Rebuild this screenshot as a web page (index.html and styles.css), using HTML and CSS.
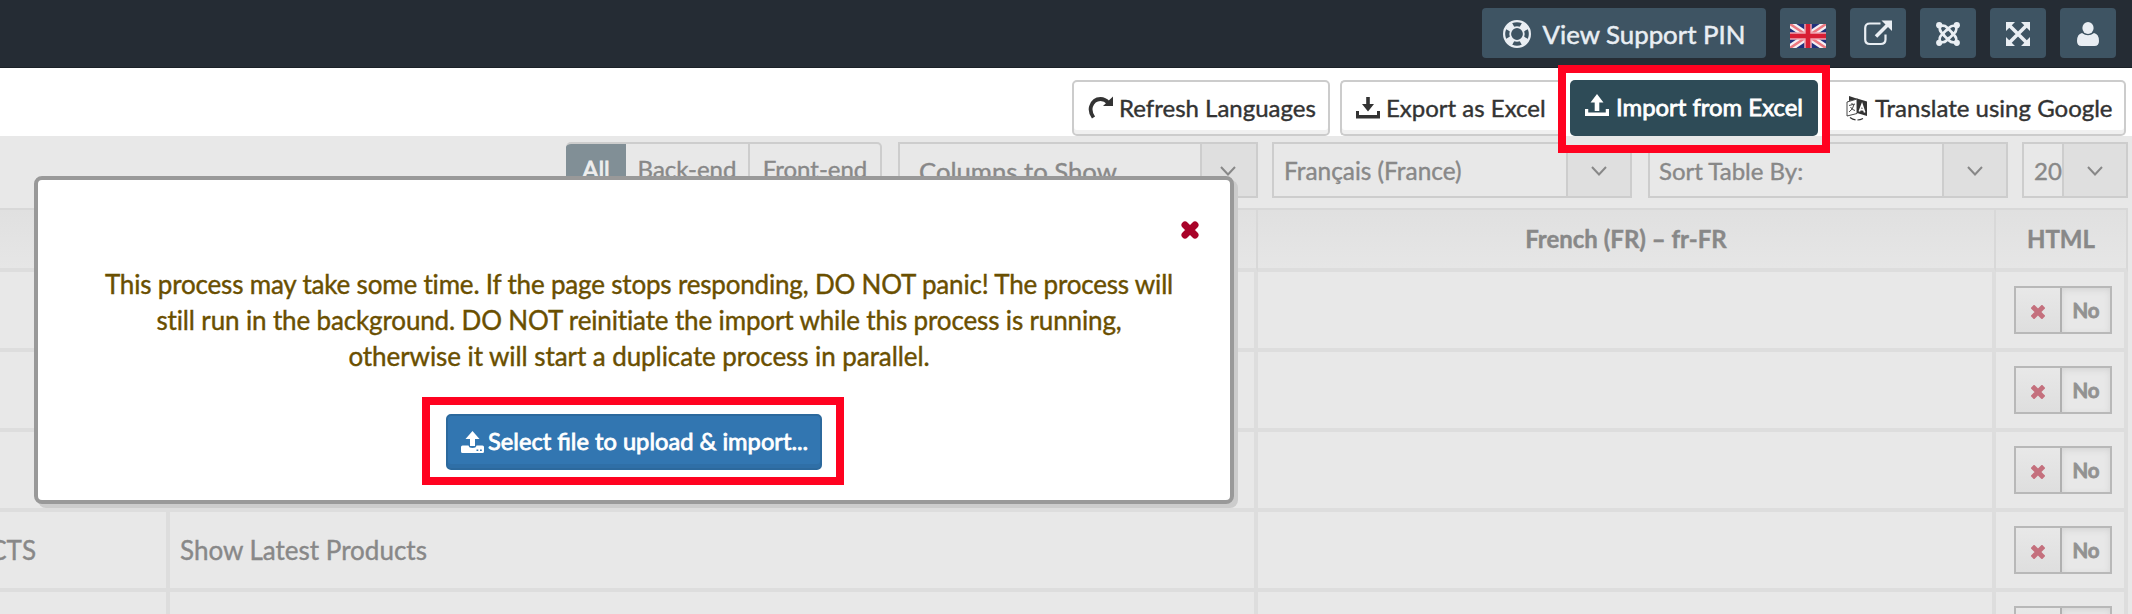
FILE: index.html
```html
<!DOCTYPE html>
<html lang="en">
<head>
<meta charset="utf-8">
<title>Language Manager</title>
<link rel="stylesheet" href="styles.css">
</head>
<body>
<header class="topbar">
  <button class="tb-btn support">
    <svg width="28" height="28" viewBox="0 0 28 28" fill="none" stroke="currentColor"><circle cx="14" cy="14" r="12.900" stroke-width="2.200"/><circle cx="14" cy="14" r="6.800" stroke-width="1.800"/><g fill="currentColor" stroke="none" transform="rotate(45 14 14)"><path id="w" d="M9.500 2Q14 .4 18.500 2L16.800 8.200Q14 7 11.200 8.200Z"/><use href="#w" transform="rotate(90 14 14)"/><use href="#w" transform="rotate(180 14 14)"/><use href="#w" transform="rotate(270 14 14)"/></g></svg>
    <span>View Support PIN</span>
  </button>
  <button class="tb-btn flag">
    <svg width="36" height="24" viewBox="0 0 36 24"><rect width="36" height="24" fill="#20307c"/><path d="M0 0L36 24M36 0L0 24" stroke="#f4f0f4" stroke-width="7"/><path d="M0 0L36 24M36 0L0 24" stroke="#ec7880" stroke-width="2.600"/><path d="M18 0V24M0 12H36" stroke="#f0a8b4" stroke-width="7.500"/><path d="M18 0V24M0 12H36" stroke="#d81e34" stroke-width="4.600"/></svg>
  </button>
  <button class="tb-btn ext">
    <svg width="28" height="26" viewBox="0 0 28 26" fill="none" stroke="currentColor"><path d="M16.500 3.500H6Q1.200 3.500 1.200 8V19.500Q1.200 24 6 24H16.500Q21.500 24 21.500 19.500V14.500" stroke-width="2.200"/><path d="M12 16.500L24 4.500" stroke-width="3.600"/><path d="M17.500 .5H28V11Z" fill="currentColor" stroke="none"/></svg>
  </button>
  <button class="tb-btn">
    <svg width="24" height="24" viewBox="0 0 24 24" fill="none" stroke="currentColor" stroke-width="2.600"><g id="j"><path d="M4 4Q8.500 2.800 11 5.500L17.500 12M4 4.500Q3 8 5.500 10.500L8.500 13.500"/><circle cx="3.200" cy="3.200" r="3.100" fill="currentColor" stroke="none"/></g><use href="#j" transform="rotate(90 12 12)"/><use href="#j" transform="rotate(180 12 12)"/><use href="#j" transform="rotate(270 12 12)"/></svg>
  </button>
  <button class="tb-btn">
    <svg width="24" height="24" viewBox="0 0 24 24"><path d="M4 4L20 20M20 4L4 20" stroke="currentColor" stroke-width="3.600"/><path d="M0 0H9L0 9ZM24 0V9L15 0ZM0 24V15L9 24ZM24 24H15L24 15Z" fill="currentColor"/></svg>
  </button>
  <button class="tb-btn">
    <svg width="22" height="24" viewBox="0 0 22 24" fill="currentColor"><ellipse cx="11" cy="6" rx="5.600" ry="6"/><path d="M5 11Q11 15.500 17 11Q22 12 22 19Q22 24 17.500 24H4.500Q0 24 0 19Q0 12 5 11Z"/></svg>
  </button>
</header>

<div class="toolbar">
  <button class="btn refresh"><svg width="25" height="24" viewBox="0 0 25 24"><path d="M5.500 21.500Q1.500 16 3 10.500Q5.500 3 12.500 3Q17 3 20.500 7" fill="none" stroke="currentColor" stroke-width="3.800"/><path d="M25 .5V10H15Z" fill="currentColor"/></svg><span>Refresh Languages</span></button>
  <button class="btn export"><svg width="24" height="22" viewBox="0 0 24 22" fill="currentColor"><path d="M10.200 0H13.800V7H18L12 14.500L6 7H10.200ZM0 14H3V18H21V14H24V21.500H0Z"/></svg><span>Export as Excel</span></button>
  <div class="highlight import-mark"><button class="btn import"><svg width="24" height="22" viewBox="0 0 26 22" fill="currentColor" preserveAspectRatio="none"><path d="M13 0L20 8.500H15.500V17H10.500V8.500H6ZM0 15H3.500V18.500H22.500V15H26V22H0Z"/></svg><span>Import from Excel</span></button></div>
  <button class="btn translate"><svg width="22" height="25" viewBox="0 0 22 25"><path d="M3 0L12 3L3 5Z" fill="currentColor"/><path d="M11 2.500L21 5.500V20L11 17Z" fill="currentColor"/><path d="M1 6L11 3V17.500L1 20Z" fill="#fff" stroke="currentColor" stroke-width=".9"/><path d="M3 9.500L9 8M6 7V8.500M8 8.500Q7 13.500 3 16M4.500 11Q6 14 9 14.500" fill="none" stroke="currentColor" stroke-width=".9"/><path d="M4 21.500Q10 26 17 22.500" fill="none" stroke="currentColor" stroke-width="1.200" stroke-dasharray="6 2"/><path d="M13.300 15.500L16 8.500L18.700 16.500M14.300 13.300L17.800 14" fill="none" stroke="#fff" stroke-width="1.700"/></svg><span>Translate using Google</span></button>
</div>

<main class="content">
  <div class="filters">
    <div class="tabs"><span class="tab on">All</span><span class="tab back">Back-end</span><span class="tab front">Front-end</span></div>
    <div class="select columns"><span class="val">Columns to Show</span><span class="arrow"><svg width="16" height="10" viewBox="0 0 16 10"><path d="M1 1L8 8.500L15 1"/></svg></span></div>
    <div class="select lang"><span class="val">Français (France)</span><span class="arrow"><svg width="16" height="10" viewBox="0 0 16 10"><path d="M1 1L8 8.500L15 1"/></svg></span></div>
    <div class="select sort"><span class="val">Sort Table By:</span><span class="arrow"><svg width="16" height="10" viewBox="0 0 16 10"><path d="M1 1L8 8.500L15 1"/></svg></span></div>
    <div class="select limit"><span class="val">20</span><span class="arrow"><svg width="16" height="10" viewBox="0 0 16 10"><path d="M1 1L8 8.500L15 1"/></svg></span></div>
  </div>
  <div class="grid">
    <div class="row head"><div class="c"></div><div class="c"></div><div class="c">French (FR) – fr-FR</div><div class="c">HTML</div></div>
    <div class="row"><div class="c"></div><div class="c"></div><div class="c"></div><div class="c"><div class="toggle"><span class="x"><svg width="16" height="16" viewBox="0 0 16 16"><path d="M3.500 3.500L12.500 12.500M12.500 3.500L3.500 12.500"/></svg></span><span class="no">No</span></div></div></div>
    <div class="row"><div class="c"></div><div class="c"></div><div class="c"></div><div class="c"><div class="toggle"><span class="x"><svg width="16" height="16" viewBox="0 0 16 16"><path d="M3.500 3.500L12.500 12.500M12.500 3.500L3.500 12.500"/></svg></span><span class="no">No</span></div></div></div>
    <div class="row"><div class="c"></div><div class="c"></div><div class="c"></div><div class="c"><div class="toggle"><span class="x"><svg width="16" height="16" viewBox="0 0 16 16"><path d="M3.500 3.500L12.500 12.500M12.500 3.500L3.500 12.500"/></svg></span><span class="no">No</span></div></div></div>
    <div class="row"><div class="c key"><span>CTS</span></div><div class="c">Show Latest Products</div><div class="c"></div><div class="c"><div class="toggle"><span class="x"><svg width="16" height="16" viewBox="0 0 16 16"><path d="M3.500 3.500L12.500 12.500M12.500 3.500L3.500 12.500"/></svg></span><span class="no">No</span></div></div></div>
    <div class="row last"><div class="c"></div><div class="c"></div><div class="c"></div><div class="c"><div class="toggle"><span class="x"></span><span class="no"></span></div></div></div>
  </div>
</main>

<section class="modal">
  <svg class="close" width="18" height="18" viewBox="0 0 18 18"><path d="M4 4L14 14M14 4L4 14"/></svg>
  <p class="msg">This process may take some time. If the page stops responding, DO NOT panic! The process will<br><span class="mid">still run in the background. DO NOT reinitiate the import while this process is running,</span><br><span class="end">otherwise it will start a duplicate process in parallel.</span></p>
  <div class="highlight select-mark"><button class="btn upload"><svg width="23" height="22" viewBox="0 0 23 22" fill="currentColor"><path d="M11.500 0L18.500 8H14V15H9V8H4.500Z"/><path fill-rule="evenodd" d="M1.500 14.500H7.500Q8 17 11.500 17Q15 17 15.500 14.500H21.500Q23 14.500 23 16V20.500Q23 22 21.500 22H1.500Q0 22 0 20.500V16Q0 14.500 1.500 14.500ZM15.500 18.500V20H17.300V18.500ZM19 18.500V20H20.800V18.500Z"/></svg><span>Select file to upload &amp; import...</span></button></div>
</section>
</body>
</html>
```

FILE: styles.css
```css
* { box-sizing: border-box; }
body { margin: 0; width: 2132px; height: 614px; overflow: hidden; position: relative; background: #fff; font: 26px/36px Lato, sans-serif; color: #333; -webkit-text-stroke: .4px; }
button { font: inherit; margin: 0; padding: 0; border: 0; display: flex; align-items: center; white-space: nowrap; }
svg { display: block; flex: none; }
span { white-space: nowrap; }

.topbar { height: 68px; padding: 8px 16px 0; display: flex; justify-content: flex-end; gap: 14px; background: #252c34; border-bottom: 1px solid #1b2127; }
.tb-btn { width: 56px; height: 50px; justify-content: center; background: #3e5463; color: #e9eef3; border-radius: 4px; }
.tb-btn > svg { margin-top: 2px; }
.support { width: 284px; gap: 12px; font-size: 25.8px; -webkit-text-stroke: .5px; }
.support span { padding-top: 2px; }
.tb-btn.flag > svg { margin-top: 6px; }
.tb-btn.ext > svg { margin-top: -1px; }

.toolbar { height: 68px; padding: 12px 6px 0 1072px; display: flex; }
.btn { height: 56px; padding-left: 13px; border: 2px solid #ccc; border-radius: 5px; background: #fff; box-shadow: inset 0 -4px #f0f0f0; color: #333; gap: 7px; font-size: 24px; }
.refresh { width: 258px; margin-right: 10px; padding-left: 14px; gap: 6px; }
.export { width: 218px; padding-left: 14px; gap: 6px; border-right: 0; border-radius: 5px 0 0 5px; }
.highlight { border: 8px solid #ff0220; position: relative; z-index: 3; background: #fff; }
.import-mark { width: 272px; height: 88px; margin-top: -15px; padding: 7px 4px; background: linear-gradient(#fff 63px, #e8e8e8 63px); }
.import { width: 248px; border: 0; padding: 0 0 3px 15px; background: #2e4b57; color: #fff; box-shadow: none; -webkit-text-stroke: .8px; gap: 7px; font-size: 23.9px; }
.import svg { margin-top: -3px; }
.translate { width: 296px; border-left: 0; padding-left: 16px; gap: 7px; border-radius: 0 5px 5px 0; }

.content { background: #e8e8e8; height: 478px; color: #888; overflow: hidden; }
.filters { height: 72px; padding: 6px 4px 0 566px; display: flex; font-size: 24px; }
.tabs { display: flex; width: 316px; height: 56px; margin-right: 16px; border: 2px solid #cdcdcd; border-left: 0; border-radius: 5px; overflow: hidden; }
.tab { padding-top: 7px; text-align: center; }
.on { width: 60px; margin-top: -2px; padding-top: 9px; background: #818f96; color: #eee; -webkit-text-stroke: .8px; }
.back { width: 124px; border-right: 2px solid #cdcdcd; }
.front { flex: 1; }
.select { display: flex; height: 56px; border: 2px solid #cdcdcd; }
.val { flex: 1; padding: 9px 0 0 10px; overflow: hidden; }
.arrow { width: 64px; border-left: 2px solid #cdcdcd; background: #dfdfdf; padding: 22px 0 0 23px; }
.arrow path, .toggle path, .close path { fill: none; stroke: #888; stroke-width: 2; }
.columns { width: 360px; margin-right: 14px; }
.columns .val { padding: 9px 0 0 19px; font-size: 25.7px; }
.columns .arrow { width: 56px; padding-left: 18px; }
.lang { width: 360px; margin-right: 16px; }
.lang .val { font-size: 24.4px; }
.sort { width: 360px; margin-right: 14px; }
.sort .val { padding-left: 9px; }
.limit { width: 106px; }

.grid { width: 2128px; }
.row { display: grid; grid-template-columns: 170px 1088px 738px 132px; height: 80px; }
.c { border-right: 4px solid #ddd; border-bottom: 4px solid #ddd; padding: 20px 0 0 10px; }
.key { display: flex; justify-content: flex-end; padding: 20px 130px 0 0; }
.last { height: 26px; overflow: hidden; }
.last .c { height: 80px; }
.head { height: 64px; font-weight: 700; font-size: 24px; text-align: center; }
.head .c { border-right: 2px solid #d8d8d8; border-top: 2px solid #d8d8d8; background: linear-gradient(#e0e0e0, #e6e6e6); padding: 11px 0 0; }
.toggle { display: flex; width: 98px; height: 48px; margin: -6px 0 0 8px; border: 2px solid #b8b8b8; }
.x { width: 46px; border-right: 2px solid #b0b0b0; background: linear-gradient(#e8e8e8, #dedede); padding: 16px 0 0 14px; }
.x path { stroke: #c4707d; stroke-width: 5.6; stroke-linecap: square; }
.x svg { padding: 1px; }
.no { flex: 1; text-align: center; font-size: 20.4px; line-height: 44px; font-weight: 700; color: #929292; box-shadow: inset 0 2px 6px #d4d4d4; -webkit-text-stroke: .8px; }

.modal { position: absolute; left: 34px; top: 176px; width: 1200px; height: 328px; z-index: 2; background: #fff; border: 4px solid #999; border-radius: 8px; box-shadow: 4px 4px #ccc; display: flex; flex-direction: column; }
.close { margin: 41px 31px 0 auto; }
.close path { stroke: #a90329; stroke-width: 7; stroke-linecap: round; }
.msg { margin: 27px 0 23px; width: 1202px; text-align: center; color: #6a4f00; white-space: nowrap; letter-spacing: -.18px; }
.mid { letter-spacing: -.14px; }
.end { letter-spacing: -.07px; }
.select-mark { width: 422px; height: 88px; margin-left: 384px; padding: 9px 16px; }
.upload { width: 376px; padding-bottom: 3px; background: #3276b1; border-color: #2c699d; box-shadow: inset 0 -4px #2f6fa7; color: #fff; gap: 4px; font-size: 23.7px; -webkit-text-stroke: .8px; }
.upload svg { margin-top: 2px; }
```
